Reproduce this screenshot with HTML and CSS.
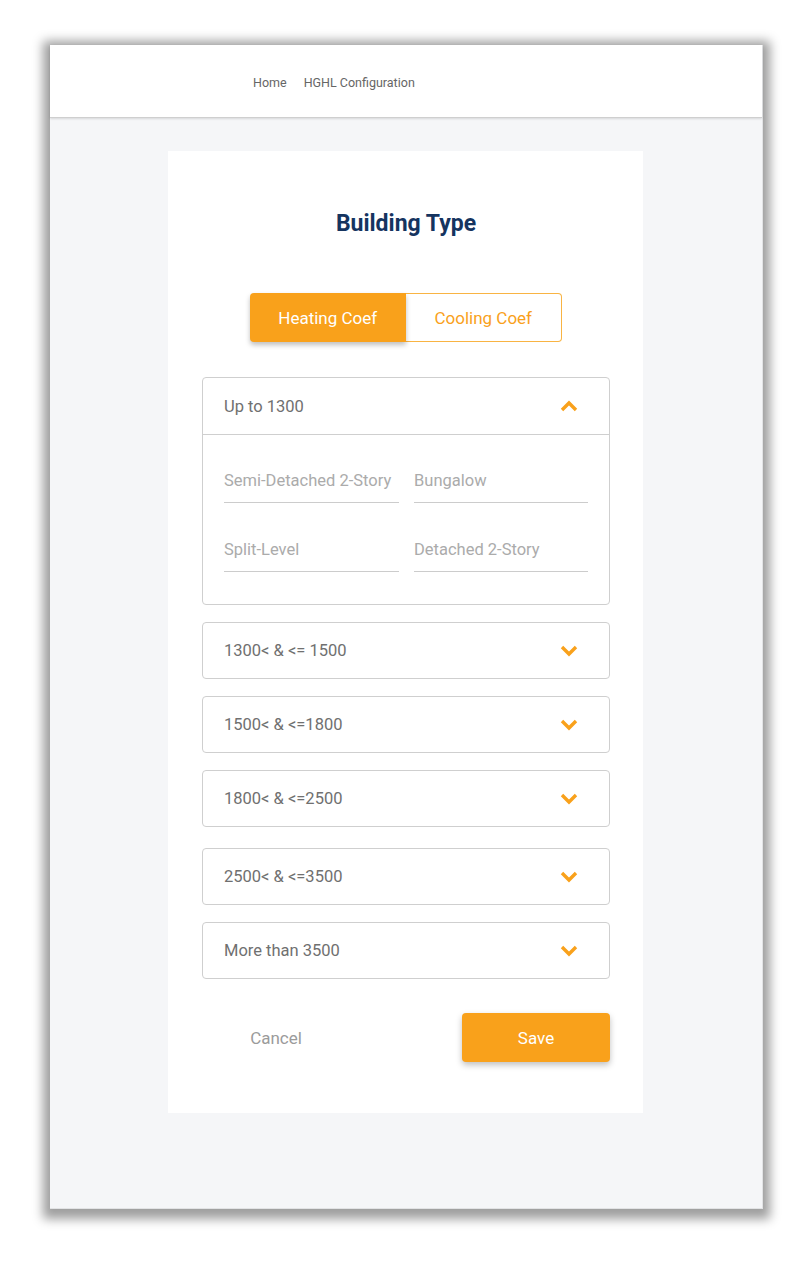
FILE: index.html
```html
<!DOCTYPE html>
<html>
<head>
<meta charset="utf-8">
<link rel="stylesheet" href="styles.css">
</head>
<body>
<div class="frame">
  <header class="topbar">
    <nav class="nav">
      <a class="nav-link">Home</a>
      <a class="nav-link">HGHL Configuration</a>
    </nav>
  </header>
  <main class="main">
    <section class="card">
      <h1 class="title">Building Type</h1>
      <div class="toggle">
        <button class="toggle-btn toggle-btn--active">Heating Coef</button>
        <button class="toggle-btn">Cooling Coef</button>
      </div>
      <div class="accordion">
        <div class="acc-item acc-item--open">
          <div class="acc-head">
            <span class="acc-label">Up to 1300</span>
            <svg class="chev" width="18" height="12" viewBox="0 0 18 12"><path d="M2 10 L9 3 L16 10" fill="none" stroke="#f9a11b" stroke-width="3.4" stroke-linejoin="miter"/></svg>
          </div>
          <div class="acc-body">
            <div class="field">Semi-Detached 2-Story</div>
            <div class="field">Bungalow</div>
            <div class="field">Split-Level</div>
            <div class="field">Detached 2-Story</div>
          </div>
        </div>
        <div class="acc-item">
          <div class="acc-head">
            <span class="acc-label">1300&lt; &amp; &lt;= 1500</span>
            <svg class="chev" width="18" height="12" viewBox="0 0 18 12"><path d="M2 2 L9 9 L16 2" fill="none" stroke="#f9a11b" stroke-width="3.4"/></svg>
          </div>
        </div>
        <div class="acc-item">
          <div class="acc-head">
            <span class="acc-label">1500&lt; &amp; &lt;=1800</span>
            <svg class="chev" width="18" height="12" viewBox="0 0 18 12"><path d="M2 2 L9 9 L16 2" fill="none" stroke="#f9a11b" stroke-width="3.4"/></svg>
          </div>
        </div>
        <div class="acc-item">
          <div class="acc-head">
            <span class="acc-label">1800&lt; &amp; &lt;=2500</span>
            <svg class="chev" width="18" height="12" viewBox="0 0 18 12"><path d="M2 2 L9 9 L16 2" fill="none" stroke="#f9a11b" stroke-width="3.4"/></svg>
          </div>
        </div>
        <div class="acc-item acc-item--spaced">
          <div class="acc-head">
            <span class="acc-label">2500&lt; &amp; &lt;=3500</span>
            <svg class="chev" width="18" height="12" viewBox="0 0 18 12"><path d="M2 2 L9 9 L16 2" fill="none" stroke="#f9a11b" stroke-width="3.4"/></svg>
          </div>
        </div>
        <div class="acc-item">
          <div class="acc-head">
            <span class="acc-label">More than 3500</span>
            <svg class="chev" width="18" height="12" viewBox="0 0 18 12"><path d="M2 2 L9 9 L16 2" fill="none" stroke="#f9a11b" stroke-width="3.4"/></svg>
          </div>
        </div>
      </div>
      <div class="actions">
        <button class="btn btn--cancel">Cancel</button>
        <button class="btn btn--save">Save</button>
      </div>
    </section>
  </main>
</div>
</body>
</html>
```

FILE: styles.css
```css
* { box-sizing: border-box; }
html, body { margin: 0; padding: 0; background: #ffffff; }
body {
  font-family: Roboto, "Liberation Sans", sans-serif;
  padding: 45px 37px 60px 50px;
}
.frame {
  width: 713px;
  height: 1164px;
  background: #f5f6f8;
  box-shadow: 0 3px 10px 7px rgba(0, 0, 0, 0.38);
  border-right: 1px solid #e2e3e5;
  border-bottom: 1px solid #e2e3e5;
  display: flex;
  flex-direction: column;
}
.topbar {
  height: 73px;
  background: #ffffff;
  border-bottom: 1px solid #cfcfcf;
  box-shadow: 0 1px 2px rgba(0, 0, 0, 0.12);
  display: flex;
  align-items: center;
  padding-left: 203px;
  padding-top: 2px;
}
.nav { display: flex; gap: 17px; }
.nav-link {
  font-size: 12.5px;
  font-weight: 400;
  color: #666666;
}
.main {
  padding: 33px 0 0 118px;
}
.card {
  width: 475px;
  height: 962px;
  background: #ffffff;
  padding: 57px 33px 0 34px;
  display: flex;
  flex-direction: column;
}
.title {
  margin: 0;
  text-align: center;
  font-size: 23px;
  line-height: 31px;
  font-weight: 700;
  color: #15345f;
}
.toggle {
  margin: 54px auto 0;
  display: flex;
  width: 312px;
  height: 49px;
}
.toggle-btn {
  flex: 1;
  font-family: Roboto, "Liberation Sans", sans-serif;
  font-size: 17px;
  color: #f9a11b;
  background: #ffffff;
  border: 1px solid #f9b443;
  border-left: none;
  border-radius: 0 4px 4px 0;
  padding: 0;
}
.toggle-btn--active {
  background: #f9a11b;
  color: #ffffff;
  border: none;
  border-radius: 4px 0 0 4px;
  box-shadow: 0 3px 5px rgba(0, 0, 0, 0.25);
  position: relative;
  z-index: 1;
}
.accordion {
  margin-top: 35px;
  display: flex;
  flex-direction: column;
  gap: 17px;
}
.acc-item {
  border: 1px solid #cfcfcf;
  border-radius: 4px;
  background: #ffffff;
}
.acc-item--spaced { margin-top: 4px; }
.acc-head {
  height: 55px;
  display: flex;
  align-items: center;
  justify-content: space-between;
  padding: 0 31px 0 21px;
}
.acc-item--open .acc-head {
  height: 57px;
  border-bottom: 1px solid #cfcfcf;
}
.acc-label {
  font-size: 16.5px;
  color: #707070;
}
.chev { display: block; }
.acc-body {
  display: grid;
  grid-template-columns: 175px 174px;
  column-gap: 15px;
  row-gap: 37px;
  padding: 36px 21px 32px 21px;
}
.field {
  font-size: 16.5px;
  line-height: 20px;
  color: #ababab;
  padding-bottom: 11px;
  border-bottom: 1px solid #cccccc;
}
.actions {
  margin-top: 34px;
  display: flex;
  justify-content: space-between;
}
.btn {
  width: 148px;
  height: 49px;
  font-family: Roboto, "Liberation Sans", sans-serif;
  font-size: 17px;
  border: none;
  border-radius: 4px;
  padding: 0;
}
.btn--cancel {
  background: transparent;
  color: #9b9b9b;
}
.btn--save {
  background: #f9a11b;
  color: #ffffff;
  box-shadow: 0 3px 6px rgba(0, 0, 0, 0.25);
}
```
